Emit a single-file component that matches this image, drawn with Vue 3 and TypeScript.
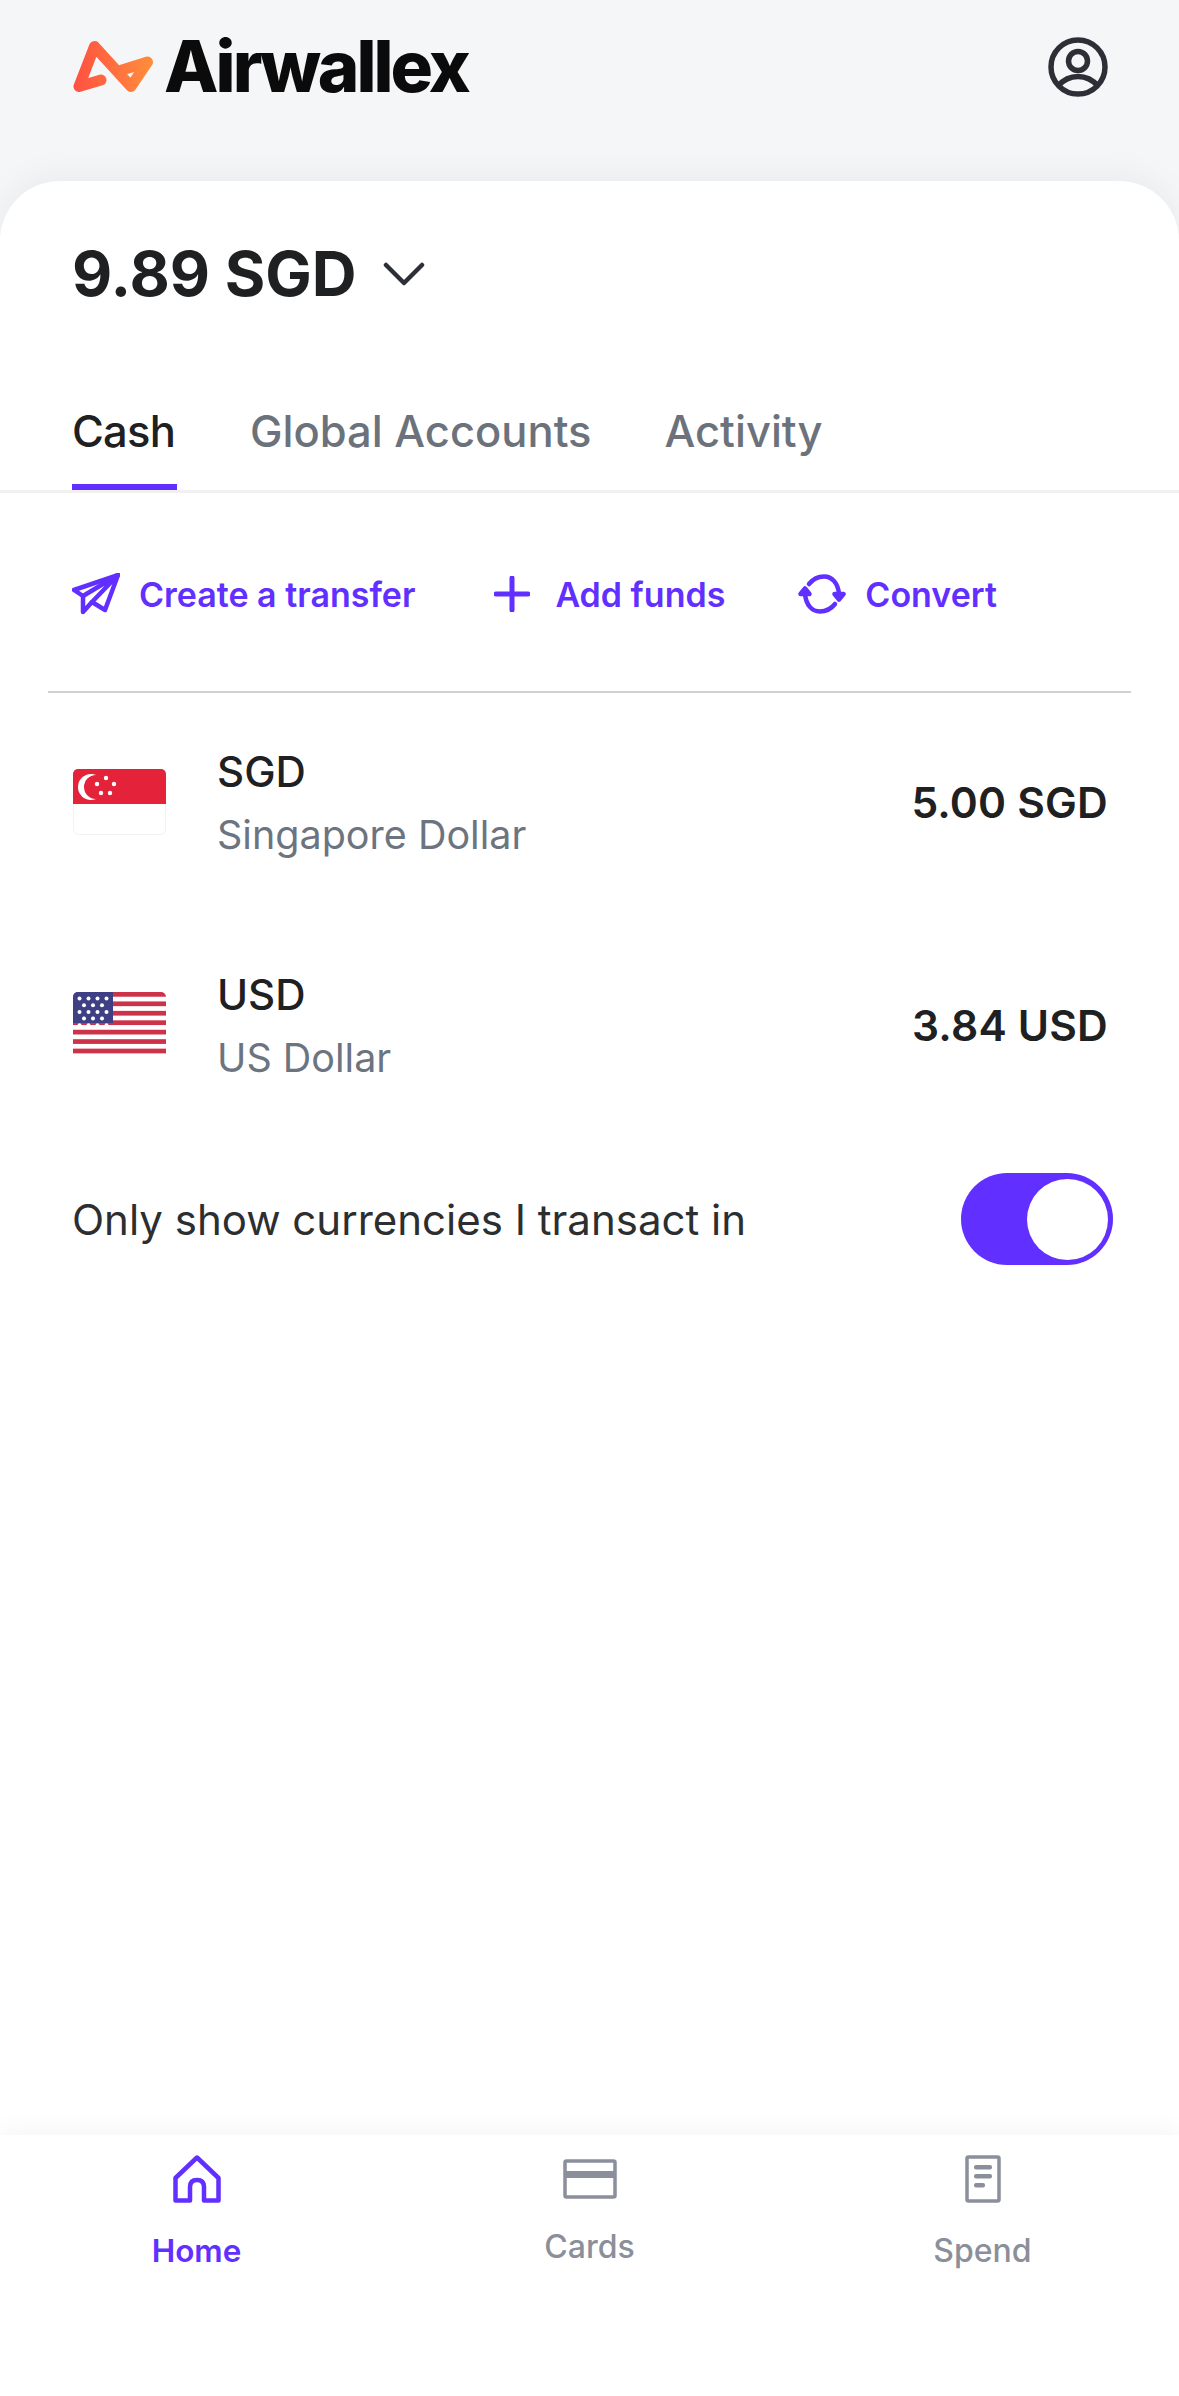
<script setup lang="ts">
interface Currency { code: string; name: string; amount: string }
const tabs: string[] = ['Cash', 'Global Accounts', 'Activity']
const currencies: Currency[] = [
  { code: 'SGD', name: 'Singapore Dollar', amount: '5.00 SGD' },
  { code: 'USD', name: 'US Dollar', amount: '3.84 USD' },
]
const stripes: number[] = [0, 2, 4, 6, 8, 10, 12]
const stars: { x: number; y: number }[] = []
for (let r = 0; r < 5; r++) {
  const n = r % 2 === 0 ? 4 : 3
  for (let c = 0; c < n; c++) {
    stars.push({ x: (r % 2 === 0 ? 6.5 : 11) + c * 9, y: 6.5 + r * 6.7 })
  }
}
</script>

<template>
  <div class="page">
    <header class="top">
      <div class="brand">
        <svg class="mark" width="81" height="53" viewBox="0 0 81 53" fill="none">
          <defs>
            <linearGradient id="awx" gradientUnits="userSpaceOnUse" x1="0" y1="30" x2="81" y2="30">
              <stop offset="0" stop-color="#ff4f42" />
              <stop offset="1" stop-color="#ff8e3c" />
            </linearGradient>
          </defs>
          <path d="M29 40 L7 46.5 L22.5 6.5 L59 46.5 L75.5 22 L47 31" stroke="url(#awx)" stroke-width="11" stroke-linejoin="round" stroke-linecap="round" />
        </svg>
        <span class="word">Airwallex</span>
      </div>
      <svg class="profile" width="60" height="60" viewBox="0 0 60 60" fill="none" stroke="#2c3036" stroke-width="5.5">
        <circle cx="30" cy="30" r="27" />
        <circle cx="30" cy="24" r="9.5" />
        <path d="M10 49 C17 41 24 39.5 30 39.5 C36 39.5 43 41 50 49" />
      </svg>
    </header>

    <main class="card">
      <div class="balance">
        <span>9.89 SGD</span>
        <svg width="42" height="24" viewBox="0 0 42 24" fill="none" stroke="#2c3036" stroke-width="4.5" stroke-linecap="round" stroke-linejoin="round">
          <path d="M3 3 L21 21 L39 3" />
        </svg>
      </div>

      <nav class="tabs">
        <span v-for="(t, i) in tabs" :key="t" class="tab" :class="{ active: i === 0 }">{{ t }}</span>
      </nav>

      <div class="actions">
        <div class="action a1">
          <svg width="48" height="42" viewBox="0 0 48 42" fill="none" stroke="#612fff" stroke-width="4.5" stroke-linejoin="round" stroke-linecap="round">
            <path d="M46 2 L2 17 L11 23 L11 39 L20 29 L33 37 Z" />
            <path d="M11 23 L46 2 L20 29" />
          </svg>
          <span>Create a transfer</span>
        </div>
        <div class="action a2">
          <svg width="36" height="36" viewBox="0 0 36 36" fill="none" stroke="#612fff" stroke-width="5" stroke-linecap="round">
            <path d="M18 2 V34 M2 18 H34" />
          </svg>
          <span>Add funds</span>
        </div>
        <div class="action a3">
          <svg width="48" height="40" viewBox="0 0 48 40" fill="none" stroke="#612fff" stroke-width="4.5" stroke-linecap="round" stroke-linejoin="round">
            <path d="M11 10 C15 5 20 2.5 26 2.5 C34 2.5 40 9 41 20" />
            <path d="M37 30 C33 35 28 37.5 22 37.5 C14 37.5 8 31 7 20" />
            <path d="M2.5 20 L7 14.5 L11.5 20 Z" fill="#612fff" />
            <path d="M36.5 20 L41 25.5 L45.5 20 Z" fill="#612fff" />
          </svg>
          <span>Convert</span>
        </div>
      </div>

      <div class="divider"></div>

      <div v-for="c in currencies" :key="c.code" class="row">
        <svg v-if="c.code === 'SGD'" class="flag" width="93" height="66" viewBox="0 0 93 66">
          <rect x="0.5" y="0.5" width="92" height="65" rx="5" fill="#fff" stroke="#f1f2f3" />
          <path d="M0 35 V5 A5 5 0 0 1 5 0 H88 A5 5 0 0 1 93 5 V35 Z" fill="#e4223a" />
          <circle cx="18" cy="18" r="13" fill="#fff" />
          <circle cx="23" cy="18" r="12" fill="#e4223a" />
          <circle cx="33" cy="9" r="2.2" fill="#fff" />
          <circle cx="41" cy="15" r="2.2" fill="#fff" />
          <circle cx="24" cy="15" r="2.2" fill="#fff" />
          <circle cx="28" cy="24" r="2.2" fill="#fff" />
          <circle cx="37" cy="24" r="2.2" fill="#fff" />
        </svg>
        <svg v-else class="flag" width="93" height="66" viewBox="0 0 93 66">
          <defs>
            <clipPath id="usclip"><rect width="93" height="66" rx="5" /></clipPath>
          </defs>
          <g clip-path="url(#usclip)">
            <rect width="93" height="66" fill="#fff" />
            <rect v-for="s in stripes" :key="s" x="0" :y="s * 4.72" width="93" height="4.72" fill="#cc3348" />
            <rect width="40" height="31" fill="#3f3f85" />
            <circle v-for="(p, i) in stars" :key="i" :cx="p.x" :cy="p.y" r="2" fill="#fff" />
          </g>
        </svg>
        <div class="names">
          <div class="code">{{ c.code }}</div>
          <div class="name">{{ c.name }}</div>
        </div>
        <div class="amount">{{ c.amount }}</div>
      </div>

      <div class="filter">
        <span>Only show currencies I transact in</span>
        <div class="toggle"><div class="knob"></div></div>
      </div>
    </main>

    <footer class="bottom">
      <div class="item on">
        <svg width="48" height="48" viewBox="0 0 48 48" fill="none" stroke="#612fff" stroke-width="4.5" stroke-linejoin="round">
          <path d="M24 2.5 L45.5 23 V45.5 H31 V32 C31 27 28 25 24 25 C20 25 17 27 17 32 V45.5 H2.5 V23 Z" />
        </svg>
        <span>Home</span>
      </div>
      <div class="item cards">
        <svg width="54" height="40" viewBox="0 0 54 40" fill="none">
          <rect x="2" y="2" width="50" height="36" rx="1.5" stroke="#8a8f9b" stroke-width="3.5" />
          <rect x="2" y="12" width="50" height="7" fill="#8a8f9b" />
        </svg>
        <span>Cards</span>
      </div>
      <div class="item">
        <svg width="36" height="48" viewBox="0 0 36 48" fill="none">
          <rect x="2" y="2" width="32" height="44" rx="1.5" stroke="#8a8f9b" stroke-width="3.5" />
          <rect x="9" y="10" width="18" height="4.5" rx="2" fill="#8a8f9b" />
          <rect x="9" y="19" width="18" height="4.5" rx="2" fill="#8a8f9b" />
          <rect x="9" y="28" width="11" height="4.5" rx="2" fill="#8a8f9b" />
        </svg>
        <span>Spend</span>
      </div>
    </footer>
  </div>
</template>

<style scoped>
.page {
  width: 1179px;
  height: 2396px;
  display: flex;
  flex-direction: column;
  overflow: hidden;
  background: #f5f6f8;
  font-family: Inter, "Liberation Sans", sans-serif;
}
.top {
  height: 181px;
  flex: none;
  display: flex;
  justify-content: space-between;
  align-items: flex-start;
  padding: 37px 71px 0 72px;
  box-sizing: border-box;
}
.brand {
  display: flex;
  align-items: center;
  gap: 11px;
  margin-top: 3px;
}
.word {
  font-size: 70.8px;
  font-weight: 800;
  line-height: 53px;
  letter-spacing: -3px;
  color: #0b0b0c;
}
.card {
  flex: 1;
  background: #fff;
  border-radius: 60px 60px 0 0;
  box-shadow: 0 -6px 34px rgba(20, 24, 40, 0.05);
  position: relative;
}
.balance {
  display: flex;
  align-items: center;
  gap: 26px;
  padding: 53px 72px 0;
  height: 80px;
  font-size: 62px;
  font-weight: 700;
  line-height: 80px;
  color: #1e2022;
}
.tabs {
  display: flex;
  gap: 73px;
  margin-top: 60px;
  padding: 0 72px;
  height: 119px;
  border-bottom: 3px solid #f1f1f2;
  box-sizing: border-box;
}
.tab {
  font-size: 43.5px;
  font-weight: 500;
  line-height: 56px;
  padding-top: 29px;
  color: #6c727c;
  box-sizing: border-box;
  height: 116px;
}
.tab.active {
  color: #1e2022;
  min-width: 105px;
  letter-spacing: -0.8px;
  border-bottom: 6px solid #612fff;
}
.actions {
  display: flex;
  align-items: center;
  padding: 4px 0 0 72px;
  height: 194px;
  color: #612fff;
  font-size: 34px;
  font-weight: 600;
}
.action {
  display: flex;
  align-items: center;
}
.a1 svg { margin-right: 19px; }
.a2 { margin-left: 79px; }
.a2 svg { margin-right: 25px; }
.a3 { margin-left: 73px; }
.a3 svg { margin-right: 19px; }
.divider {
  height: 2px;
  margin: 0 48px;
  background: #d0d0d2;
}
.row {
  display: flex;
  align-items: center;
  height: 218px;
  padding: 0 71px 0 73px;
  margin-bottom: 5px;
}
.flag { flex: none; margin-right: 51px; }
.names { flex: 1; }
.code {
  font-size: 42px;
  font-weight: 500;
  line-height: 56px;
  color: #1e2022;
}
.name {
  font-size: 39.5px;
  font-weight: 400;
  line-height: 52px;
  margin-top: 9px;
  color: #6c747f;
}
.amount {
  font-size: 42.5px;
  font-weight: 600;
  letter-spacing: 0.2px;
  color: #1e2022;
}
.filter {
  display: flex;
  justify-content: space-between;
  align-items: center;
  padding: 0 66px 0 72px;
  height: 110px;
  margin-top: 30px;
  font-size: 42px;
  font-weight: 400;
  color: #2c2e30;
}
.toggle {
  width: 152px;
  height: 92px;
  border-radius: 46px;
  background: #612fff;
  position: relative;
}
.knob {
  position: absolute;
  top: 6px;
  right: 5px;
  width: 81px;
  height: 81px;
  border-radius: 50%;
  background: #fff;
}
.bottom {
  height: 261px;
  flex: none;
  display: grid;
  grid-template-columns: repeat(3, 393px);
  background: #fff;
  box-shadow: 0 -6px 24px rgba(20, 24, 40, 0.04);
  position: relative;
  font-size: 32px;
  font-weight: 500;
  color: #8a8f9b;
}
.item {
  display: flex;
  flex-direction: column;
  align-items: center;
  padding-top: 20px;
}
.item svg { height: 48px; }
.item span {
  margin-top: 28px;
  line-height: 40px;
}
.item.on { color: #612fff; font-weight: 600; font-size: 31.5px; }
.item.cards span { margin-top: 24px; }
.cards svg { height: 48px; }
</style>
